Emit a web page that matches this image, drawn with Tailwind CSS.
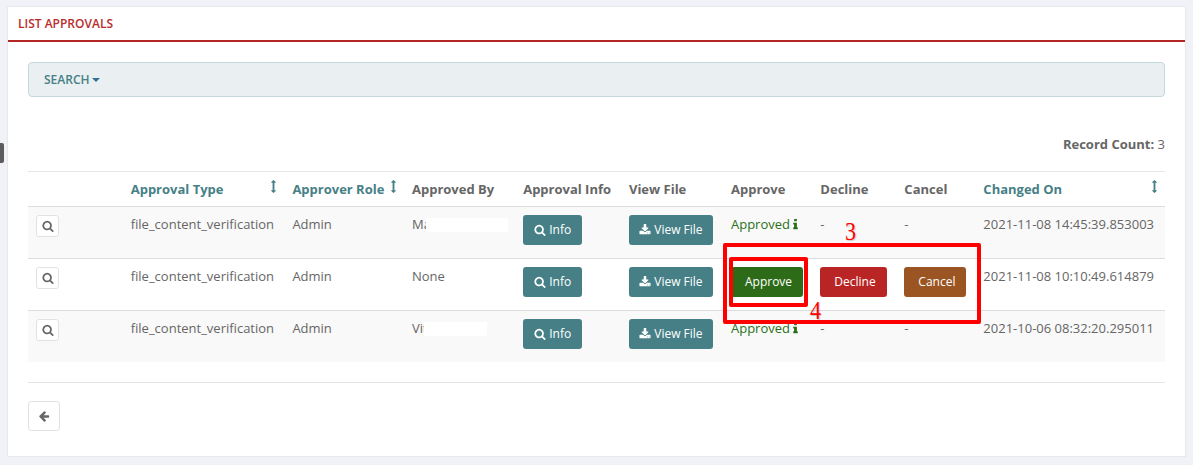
<!DOCTYPE html>
<html lang="en">
<head>
<meta charset="utf-8">
<title>List Approvals</title>
<script src="https://cdn.jsdelivr.net/npm/@tailwindcss/browser@4"></script>
</head>
<body class="relative h-[465px] overflow-hidden bg-[#f1f2f7] pt-[6px] pl-[7px] font-['Open_Sans',sans-serif] text-[13px] leading-[18px] text-[#666666]">
<svg class="hidden">
  <symbol id="search" viewBox="0 0 1792 1792"><path d="M1216 832q0-185-131.5-316.5t-316.5-131.5-316.5 131.5-131.5 316.5 131.5 316.5 316.5 131.5 316.5-131.5 131.5-316.5zm512 832q0 52-38 90t-90 38q-54 0-90-38l-343-342q-179 124-399 124-143 0-273.5-55.5t-225-150-150-225-55.5-273.5 55.5-273.5 150-225 225-150 273.5-55.5 273.5 55.5 225 150 150 225 55.5 273.5q0 220-124 399l343 343q37 37 37 90z"/></symbol>
  <symbol id="back" viewBox="0 0 1792 1792"><path d="M1664 896v128q0 53-32.5 90.5t-84.5 37.5h-704l293 294q38 36 38 90t-38 90l-75 76q-37 37-90 37-52 0-91-37l-651-652q-37-37-37-90 0-52 37-91l651-650q38-38 91-38 52 0 90 38l75 74q38 38 38 91t-38 91l-293 293h704q52 0 84.5 37.5t32.5 90.5z"/></symbol>
  <symbol id="info" viewBox="576 0 640 1792"><path d="M1216 1344v128q0 26-19 45t-45 19h-512q-26 0-45-19t-19-45v-128q0-26 19-45t45-19h64v-384h-64q-26 0-45-19t-19-45v-128q0-26 19-45t45-19h384q26 0 45 19t19 45v576h64q26 0 45 19t19 45zm-128-1152v192q0 26-19 45t-45 19h-256q-26 0-45-19t-19-45v-192q0-26 19-45t45-19h256q26 0 45 19t19 45z"/></symbol>
  <symbol id="sort" viewBox="576 0 640 1792"><path d="M1216 320q0 26-19 45t-45 19h-128v1024h128q26 0 45 19t19 45-19 45l-256 256q-19 19-45 19t-45-19l-256-256q-19-19-19-45t19-45 45-19h128v-1024h-128q-26 0-45-19t-19-45 19-45l256-256q19-19 45-19t45 19l256 256q19 19 19 45z"/></symbol>
  <symbol id="download" viewBox="0 0 1792 1792"><path d="M1344 1344q0-26-19-45t-45-19-45 19-19 45 19 45 45 19 45-19 19-45zm256 0q0-26-19-45t-45-19-45 19-19 45 19 45 45 19 45-19 19-45zm128-224v320q0 40-28 68t-68 28h-1472q-40 0-68-28t-28-68v-320q0-40 28-68t68-28h465l135 136q58 56 136 56t136-56l136-136h464q40 0 68 28t28 68zm-325-569q17 41-14 70l-448 448q-18 19-45 19t-45-19l-448-448q-31-29-14-70 17-39 59-39h256v-448q0-26 19-45t45-19h256q26 0 45 19t19 45v448h256q42 0 59 39z"/></symbol>
</svg>

<main class="h-[451px] w-[1179px] border border-[#e7e8ea] bg-white">
  <header class="flex h-[35px] items-center border-b-2 border-[#b32424] pl-[10px] text-[12px] font-semibold text-[#b92c2c]">LIST APPROVALS</header>
  <div class="pt-[20px] pr-[20px] pl-[20px]">
    <div class="flex h-[35px] items-center rounded-[4px] border border-[#c5d9dc] bg-[#eaeff2] pl-[15px] text-[12px] font-semibold text-[#468086]">SEARCH<svg class="mt-px ml-[2px] h-[4px] w-[8px] fill-[#31708f]" viewBox="0 0 8 4"><path d="M0 0h8L4 4z"/></svg></div>
    <div class="mt-[38px] text-right"><b>Record Count:</b> 3</div>

    <div class="mt-[18px] whitespace-nowrap">
      <div class="grid h-[36px] grid-cols-[94.7px_161.7px_119.6px_111.2px_105.8px_102px_89.4px_84px_79px_189.6px] border-t border-b border-t-[#e7e7e7] border-b-[#dddddd] pt-[8px] font-bold *:px-[8px]">
        <div></div>
        <div class="flex justify-between text-[#468086]">Approval Type<svg class="h-[13px] w-[5px] fill-current"><use href="#sort"/></svg></div>
        <div class="flex justify-between text-[#468086]">Approver Role<svg class="h-[13px] w-[5px] fill-current"><use href="#sort"/></svg></div>
        <div>Approved By</div>
        <div>Approval Info</div>
        <div>View File</div>
        <div>Approve</div>
        <div>Decline</div>
        <div>Cancel</div>
        <div class="flex justify-between text-[#468086]">Changed On<svg class="h-[13px] w-[5px] fill-current"><use href="#sort"/></svg></div>
      </div>

      <div class="grid h-[52px] grid-cols-[94.7px_161.7px_119.6px_111.2px_105.8px_102px_89.4px_84px_79px_189.6px] border-b border-[#dddddd] bg-[#f9f9f9] pt-[8px] *:px-[8px]">
        <div><span class="flex h-[22px] w-[23px] items-center justify-center rounded-[3px] border border-[#e2e2e4] bg-white"><svg class="h-[12px] w-[12px] fill-current"><use href="#search"/></svg></span></div>
        <div>file_content_verification</div>
        <div>Admin</div>
        <div class="flex">Ma<span class="-ml-[5px] mt-[3px] h-[14px] w-[82px] shrink-0 bg-white"></span></div>
        <div><span class="flex h-[30px] w-[59px] items-center justify-center gap-[3px] rounded-[3px] bg-[#468086] text-[12px] text-white"><svg class="h-[12px] w-[12px] fill-current"><use href="#search"/></svg>Info</span></div>
        <div><span class="flex h-[30px] w-[84px] items-center justify-center gap-[3px] rounded-[3px] bg-[#468086] text-[12px] text-white"><svg class="h-[12px] w-[12px] fill-current"><use href="#download"/></svg>View File</span></div>
        <div class="flex gap-[3px] text-[#2a7018]">Approved<svg class="mt-[3px] h-[13px] w-[5px] fill-current"><use href="#info"/></svg></div>
        <div>-</div>
        <div>-</div>
        <div>2021-11-08 14:45:39.853003</div>
      </div>

      <div class="grid h-[52px] grid-cols-[94.7px_161.7px_119.6px_111.2px_105.8px_102px_89.4px_84px_79px_189.6px] border-b border-[#dddddd] pt-[8px] *:px-[8px]">
        <div><span class="flex h-[22px] w-[23px] items-center justify-center rounded-[3px] border border-[#e2e2e4] bg-white"><svg class="h-[12px] w-[12px] fill-current"><use href="#search"/></svg></span></div>
        <div>file_content_verification</div>
        <div>Admin</div>
        <div>None</div>
        <div><span class="flex h-[30px] w-[59px] items-center justify-center gap-[3px] rounded-[3px] bg-[#468086] text-[12px] text-white"><svg class="h-[12px] w-[12px] fill-current"><use href="#search"/></svg>Info</span></div>
        <div><span class="flex h-[30px] w-[84px] items-center justify-center gap-[3px] rounded-[3px] bg-[#468086] text-[12px] text-white"><svg class="h-[12px] w-[12px] fill-current"><use href="#download"/></svg>View File</span></div>
        <div><span class="flex h-[30px] w-[72px] items-center pl-[14px] rounded-[3px] bg-[#2d6b18] text-[12px] text-white">Approve</span></div>
        <div><span class="flex h-[30px] w-[67px] items-center pl-[14px] rounded-[3px] bg-[#b92525] text-[12px] text-white">Decline</span></div>
        <div><span class="flex h-[30px] w-[62px] items-center pl-[14px] rounded-[3px] bg-[#9b5522] text-[12px] text-white">Cancel</span></div>
        <div>2021-11-08 10:10:49.614879</div>
      </div>

      <div class="grid h-[51px] grid-cols-[94.7px_161.7px_119.6px_111.2px_105.8px_102px_89.4px_84px_79px_189.6px] bg-[#f9f9f9] pt-[8px] *:px-[8px]">
        <div><span class="flex h-[22px] w-[23px] items-center justify-center rounded-[3px] border border-[#e2e2e4] bg-white"><svg class="h-[12px] w-[12px] fill-current"><use href="#search"/></svg></span></div>
        <div>file_content_verification</div>
        <div>Admin</div>
        <div class="flex">Vit<span class="-ml-[4px] mt-[3px] h-[14px] w-[63px] shrink-0 bg-white"></span></div>
        <div><span class="flex h-[30px] w-[59px] items-center justify-center gap-[3px] rounded-[3px] bg-[#468086] text-[12px] text-white"><svg class="h-[12px] w-[12px] fill-current"><use href="#search"/></svg>Info</span></div>
        <div><span class="flex h-[30px] w-[84px] items-center justify-center gap-[3px] rounded-[3px] bg-[#468086] text-[12px] text-white"><svg class="h-[12px] w-[12px] fill-current"><use href="#download"/></svg>View File</span></div>
        <div class="flex gap-[3px] text-[#2a7018]">Approved<svg class="mt-[3px] h-[13px] w-[5px] fill-current"><use href="#info"/></svg></div>
        <div>-</div>
        <div>-</div>
        <div>2021-10-06 08:32:20.295011</div>
      </div>
    </div>

    <div class="mt-[20px] border-t border-[#e5e5e5] pt-[18px]">
      <span class="flex h-[30px] w-[32px] items-center justify-center rounded-[3px] border border-[#e2e2e4]"><svg class="h-[12px] w-[12px] fill-current"><use href="#back"/></svg></span>
    </div>
  </div>
</main>

<!-- Callouts over the table -->
<div class="absolute top-[143px] left-0 h-[20px] w-[4px] rounded-r-[2px] bg-[#5c5c5c]"></div>
<div class="absolute top-[243px] left-[723px] h-[81px] w-[258px] rounded-[2px] border-4 border-[#ff0000]"></div>
<div class="absolute top-[257px] left-[729px] h-[50px] w-[79px] rounded-[2px] border-4 border-[#ff0000]"></div>
<div class="absolute top-[220px] left-[845px] scale-y-110 font-['Liberation_Serif',serif] text-[22px] leading-[24px] text-[#ff0000] [text-shadow:1px_1px_1px_#0003]">3</div>
<div class="absolute top-[299px] left-[810px] scale-y-110 font-['Liberation_Serif',serif] text-[22px] leading-[24px] text-[#ff0000] [text-shadow:1px_1px_1px_#0003]">4</div>
</body>
</html>
